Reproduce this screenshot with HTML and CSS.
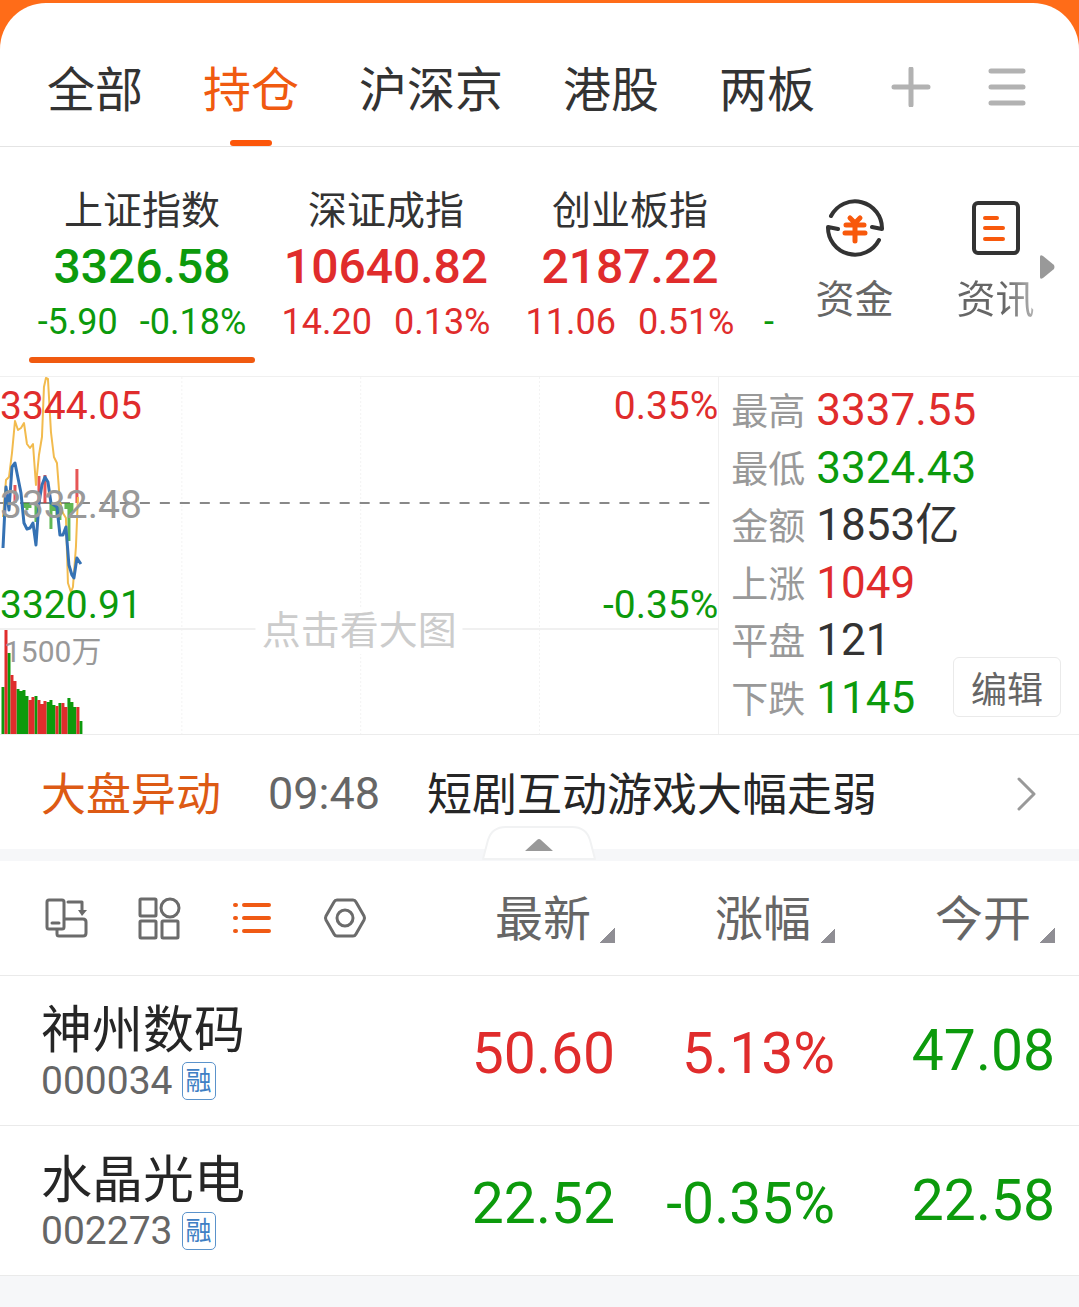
FILE: index.html
```
<!DOCTYPE html>
<html lang="zh-CN">
<head>
    <meta charset="UTF-8">
    <meta name="viewport" content="width=device-width, initial-scale=1.0">
    <title>自选股</title>
    <link rel="stylesheet" href="styles.css">
</head>
<body>
    <div class="top">
        <header class="tabs">
            <nav class="tabList">
                <a href="#all">全部</a>
                <a href="#hold" class="active">持仓</a>
                <a href="#hsj">沪深京</a>
                <a href="#hk">港股</a>
                <a href="#lb">两板</a>
            </nav>
            <div class="tabActions">
                <button type="button" aria-label="添加">
                    <svg width="40" height="40" viewBox="0 0 40 40"><path d="M20 2V38M3 20H37"/></svg>
                </button>
                <button type="button" aria-label="菜单">
                    <svg width="40" height="40" viewBox="0 0 40 40"><path d="M4 4H36M4 20H36M4 36H36"/></svg>
                </button>
            </div>
        </header>
    </div>

    <section class="indexBar">
        <div class="indexList">
            <a href="#sh" class="index down active">
                <span class="indexName">上证指数</span>
                <strong>3326.58</strong>
                <span class="change"><span>-5.90</span><span>-0.18%</span></span>
            </a>
            <a href="#sz" class="index up">
                <span class="indexName">深证成指</span>
                <strong>10640.82</strong>
                <span class="change"><span>14.20</span><span>0.13%</span></span>
            </a>
            <a href="#cyb" class="index up">
                <span class="indexName">创业板指</span>
                <strong>2187.22</strong>
                <span class="change"><span>11.06</span><span>0.51%</span></span>
            </a>
            <a href="#next" class="index down cut">
                <span class="change">-</span>
            </a>
        </div>
        <div class="shortcuts">
            <a href="#fund">
                <svg width="60" height="60" viewBox="0 0 60 60">
                    <g class="ink">
                        <path d="M6 18A27 27 0 0 1 57 31L47 29"/>
                        <path d="M54 42A27 27 0 0 1 3 29L13 31"/>
                    </g>
                    <path class="hot" d="M25 20L30 25L35 20M21 27H39M20 35H40M30 26V43"/>
                </svg>
                <span>资金</span>
            </a>
            <a href="#news">
                <svg width="60" height="60" viewBox="0 0 60 60">
                    <rect class="ink" x="8" y="5" width="44" height="50" rx="4"/>
                    <path class="hot thin" d="M19 20H31M19 30H37M19 41H37"/>
                </svg>
                <span class="fade">资讯</span>
            </a>
            <svg class="more" width="16" height="26" viewBox="0 0 16 26"><path d="M1 3V23Q1 26 4 24L15 15Q16 13 15 11L4 2Q1 0 1 3Z"/></svg>
        </div>
    </section>

    <section class="market">
        <div class="chart">
            <svg viewBox="0 0 719 357" preserveAspectRatio="none">
                <path class="grid dotted" d="M182 0V357M361 0V357M540 0V357"/>
                <path class="grid" d="M0 252H719"/>
                <path class="middle" d="M0 126H710"/>
                <path class="bar red" d="M15 126V108M39 126V99M45 126V98"/>
                <path class="bar red" d="M77 126V92"/>
                <path class="bar green" d="M24 126V131M27 126V133M30 126V131M36 126V145M51 126V152M54 126V134M57 126V138M60 126V143M66 126V132M69 126V164M72 126V136"/>
                <path class="average" d="M3 140L6 103L9 100L12 76L15 44L18 53L21 51L24 46L27 67L30 71L33 67L36 108L39 78L42 60L44 10L46 1L48 2L51 55L54 80L57 86L60 125L63 136L66 141L68 206L71 215L73 210L76 170L78 120"/>
                <path class="price" d="M3 171L6 110L9 133L12 90L15 86L18 101L21 116L24 146L27 152L30 151L33 146L36 168L39 126L42 108L45 100L48 105L51 126L54 128L57 130L60 158L63 158L66 150L69 188L72 198L74 201L77 181L81 187"/>
                <path class="volume green" d="M3 357V310M9 357V276M18 357V312M21 357V314M24 357V313M27 357V319M36 357V319M48 357V325M51 357V323M54 357V328M60 357V326M69 357V321M72 357V325M75 357V330M81 357V344"/>
                <path class="volume red" d="M6 357V253M12 357V298M15 357V304M30 357V323M33 357V320M39 357V323M42 357V327M45 357V324M57 357V329M63 357V326M66 357V330M78 357V330"/>
            </svg>
            <span class="axis high up">3344.05</span>
            <span class="axis mid">3332.48</span>
            <span class="axis low down">3320.91</span>
            <span class="axis high right up">0.35%</span>
            <span class="axis low right down">-0.35%</span>
            <span class="axis amount">1500万</span>
            <a class="enlarge" href="#chart">点击看大图</a>
        </div>
        <div class="stats">
            <dl>
                <div><dt>最高</dt><dd class="up">3337.55</dd></div>
                <div><dt>最低</dt><dd class="down">3324.43</dd></div>
                <div><dt>金额</dt><dd>1853亿</dd></div>
                <div><dt>上涨</dt><dd class="up">1049</dd></div>
                <div><dt>平盘</dt><dd>121</dd></div>
                <div><dt>下跌</dt><dd class="down">1145</dd></div>
            </dl>
            <button type="button" class="edit">编辑</button>
        </div>
    </section>

    <section class="alertBar">
        <a href="#alert">
            <span class="alertTag">大盘异动</span>
            <time>09:48</time>
            <span class="alertTitle">短剧互动游戏大幅走弱</span>
            <svg width="20" height="34" viewBox="0 0 20 34"><path d="M2 2L17 17L2 32"/></svg>
        </a>
        <button type="button" class="fold" aria-label="收起">
            <svg width="114" height="34" viewBox="0 0 114 34">
                <path class="foldEdge" d="M1 33L6 14Q10 1 24 1H90Q104 1 108 14L113 33Z"/>
                <path class="foldArrow" d="M43 25L55 14Q57 12 59 14L71 25Z"/>
            </svg>
        </button>
    </section>

    <table class="stocks">
        <thead>
            <tr>
                <th>
                    <div class="tools">
                        <button type="button" aria-label="切换横屏">
                            <svg width="44" height="44" viewBox="0 0 44 44">
                                <rect x="3" y="4" width="17" height="29" rx="2"/>
                                <path d="M8 27H15M13 34V38Q13 40 15 40H39Q42 40 42 37V26Q42 23 39 23H21M24 6H38V16"/>
                                <path class="solid" d="M34 14H43L38 20Z"/>
                            </svg>
                        </button>
                        <button type="button" aria-label="宫格">
                            <svg width="44" height="44" viewBox="0 0 44 44">
                                <rect x="3" y="3" width="16" height="17" rx="1"/>
                                <circle cx="33" cy="12" r="9"/>
                                <rect x="3" y="25" width="16" height="17" rx="1"/>
                                <rect x="25" y="25" width="16" height="17" rx="1"/>
                            </svg>
                        </button>
                        <button type="button" class="on" aria-label="列表">
                            <svg width="44" height="44" viewBox="0 0 44 44"><path d="M5 9H6M5 22H6M5 35H6M14 9H39M14 22H39M14 35H39"/></svg>
                        </button>
                        <button type="button" aria-label="设置">
                            <svg width="44" height="44" viewBox="0 0 44 44">
                                <path d="M14 4H30Q32 4 33 6L41 20Q42 22 41 24L33 38Q32 40 30 40H14Q12 40 11 38L3 24Q2 22 3 20L11 6Q12 4 14 4Z"/>
                                <circle cx="22" cy="22" r="8"/>
                            </svg>
                        </button>
                    </div>
                </th>
                <th><button type="button" class="sort">最新</button></th>
                <th><button type="button" class="sort">涨幅</button></th>
                <th><button type="button" class="sort">今开</button></th>
            </tr>
        </thead>
        <tbody>
            <tr>
                <td>
                    <div class="stockName">神州数码</div>
                    <div class="stockCode">000034<span class="tag">融</span></div>
                </td>
                <td class="up">50.60</td>
                <td class="up">5.13%</td>
                <td class="down">47.08</td>
            </tr>
            <tr>
                <td>
                    <div class="stockName">水晶光电</div>
                    <div class="stockCode">002273<span class="tag">融</span></div>
                </td>
                <td class="down">22.52</td>
                <td class="down">-0.35%</td>
                <td class="down">22.58</td>
            </tr>
        </tbody>
    </table>
</body>
</html>
```
FILE: styles.css
```
* {
    box-sizing: border-box;
}

body {
    margin: 0;
    font-family: Roboto, "Noto Sans CJK SC", sans-serif;
    background-color: #f6f7f9;
    color: #333;
}

a {
    color: inherit;
    text-decoration: none;
}

button {
    padding: 0;
    border: none;
    background: none;
    font-family: inherit;
    color: inherit;
    cursor: pointer;
}

svg {
    display: block;
    fill: none;
    stroke-linecap: round;
    stroke-linejoin: round;
}

/* Up is red and down is green */
.up {
    color: #e02c2c;
}

.down {
    color: #0c9a0c;
}

/* Tabs */
.top {
    padding-top: 3px;
    background-color: #ff6c18;
}

.tabs {
    display: flex;
    justify-content: space-between;
    padding: 58px 52px 0 47px;
    border-bottom: 1px solid #e4e4e4;
    border-radius: 46px 46px 0 0;
    background-color: #fff;
}

.tabList {
    display: flex;
    gap: 60px;
    font-size: 48px;
    line-height: 60px;
}

.tabList a {
    position: relative;
    padding-bottom: 25px;
}

.tabList .active {
    color: #f05a10;
}

.tabList .active::after {
    content: "";
    position: absolute;
    left: 50%;
    bottom: 0;
    width: 42px;
    height: 6px;
    margin-left: -21px;
    border-radius: 3px;
    background-color: #fc560a;
}

.tabActions {
    display: flex;
    align-items: center;
    gap: 56px;
    height: 52px;
}

.tabActions svg {
    stroke: #b2b2b2;
    stroke-width: 5;
}

/* Index bar */
.indexBar {
    display: flex;
    height: 229px;
    background-color: #fff;
}

.indexList {
    display: flex;
    flex: 1;
    min-width: 0;
    padding: 42px 0 13px 20px;
    overflow: hidden;
}

.index {
    position: relative;
    display: flex;
    flex: 0 0 244px;
    flex-direction: column;
    align-items: center;
}

.indexName {
    font-size: 39px;
    line-height: 44px;
    color: #333;
}

.index strong {
    font-size: 48px;
    font-weight: 500;
    line-height: 68px;
}

.change {
    display: flex;
    gap: 22px;
    font-size: 36px;
    line-height: 42px;
}

.index.active::after {
    content: "";
    position: absolute;
    left: 9px;
    right: 9px;
    bottom: 0;
    height: 6px;
    border-radius: 3px;
    background-color: #f05a10;
}

.index.cut {
    align-items: flex-start;
    padding: 112px 0 0 12px;
}

.shortcuts {
    position: relative;
    display: flex;
    padding: 51px 13px 0 0;
}

.shortcuts a {
    display: flex;
    flex-direction: column;
    align-items: center;
    width: 141px;
    font-size: 39px;
    line-height: 44px;
    color: #666;
}

.shortcuts a svg {
    margin-bottom: 20px;
    stroke-width: 4;
}

.ink {
    stroke: #333;
}

.hot {
    stroke: #f8590c;
    stroke-width: 5;
}

.thin {
    stroke-width: 4;
}

.fade {
    background: linear-gradient(to right, #666 60%, #b4b4b4);
    background-clip: text;
    -webkit-background-clip: text;
    color: transparent;
}

.more {
    position: absolute;
    top: 107px;
    right: 24px;
    fill: #999;
}

/* Market chart and numbers */
.market {
    display: grid;
    grid-template-columns: 2fr 1fr;
    height: 359px;
    border-top: 1px solid #f0f0f0;
    border-bottom: 1px solid #ececec;
    background-color: #fff;
}

.chart {
    position: relative;
    border-right: 1px solid #f0f0f0;
}

.chart svg {
    width: 100%;
    height: 357px;
    stroke-linecap: butt;
}

.grid {
    stroke: #f0f0f0;
    stroke-width: 2;
}

.dotted {
    stroke: #f3f3f3;
    stroke-width: 1;
    stroke-dasharray: 2 2;
}

.middle {
    stroke: #888;
    stroke-width: 2;
    stroke-dasharray: 10 10;
}

.red {
    stroke: #e02c2c;
}

.green {
    stroke: #0c9a0c;
}

.bar {
    stroke-width: 3;
    opacity: 0.8;
}

.bar.green {
    stroke: #3aa62a;
}

.volume {
    stroke-width: 3;
}

.average {
    stroke: #f2bb4e;
    stroke-width: 2;
}

.price {
    stroke: #3572b4;
    stroke-width: 3;
}

.axis {
    position: absolute;
    left: 0;
    font-size: 39px;
    line-height: 46px;
}

.axis.right {
    left: auto;
    right: 0;
}

.high {
    top: 6px;
}

.mid {
    top: 105px;
    color: #999;
}

.low {
    top: 205px;
}

.amount {
    top: 257px;
    left: 4px;
    font-size: 30px;
    line-height: 36px;
    color: #999;
}

.enlarge {
    position: absolute;
    top: 231px;
    left: 50%;
    padding: 0 6px;
    transform: translateX(-50%);
    background-color: #fff;
    font-size: 39px;
    line-height: 46px;
    white-space: nowrap;
    color: #ccc;
}

.stats {
    position: relative;
    padding: 6px 0 6px 12px;
}

.stats dl {
    display: flex;
    flex-direction: column;
    justify-content: space-around;
    height: 100%;
    margin: 0;
}

.stats dl div {
    display: flex;
    align-items: baseline;
    gap: 11px;
    line-height: 54px;
    white-space: nowrap;
}

.stats dt {
    font-size: 37px;
    color: #999;
}

.stats dd {
    margin: 0;
    font-size: 44px;
}

/* Floats over the end of the last row */
.edit {
    position: absolute;
    right: 18px;
    bottom: 17px;
    width: 108px;
    height: 60px;
    border: 1px solid #eaeaea;
    border-radius: 6px;
    font-size: 36px;
    color: #666;
}

/* Market alert */
.alertBar {
    position: relative;
    border-bottom: 12px solid #f6f7f9;
    background-color: #fff;
}

.alertBar a {
    display: flex;
    align-items: center;
    gap: 47px;
    height: 114px;
    padding: 4px 42px 0 41px;
    font-size: 45px;
    line-height: 60px;
}

.alertTag,
.alertTitle {
    padding-top: 4px;
}

.alertTag {
    color: #dd5a14;
}

.alertBar time {
    color: #666;
}

.alertTitle {
    flex: 1;
    color: #262626;
}

.alertBar a svg {
    stroke: #999;
    stroke-width: 3;
}

.fold {
    position: absolute;
    left: 50%;
    bottom: -11px;
    margin-left: -58px;
}

.foldEdge {
    fill: #fff;
    stroke: #f1f2f3;
    stroke-width: 2;
}

.foldArrow {
    fill: #999;
}

/* Stock table */
.stocks {
    width: 100%;
    border-collapse: collapse;
    table-layout: fixed;
    background-color: #fff;
}

.stocks tr {
    border-bottom: 1px solid #eaeaea;
}

.stocks th {
    height: 114px;
    padding: 0;
    font-weight: normal;
    text-align: right;
}

.stocks th:nth-child(2),
.stocks th:nth-child(3) {
    width: 220px;
}

.stocks th:last-child {
    width: 244px;
}

.stocks th:last-child,
.stocks td:last-child {
    padding: 0 24px 0 0;
}

.tools {
    display: flex;
    gap: 49px;
    padding-left: 44px;
}

.tools svg {
    stroke: #6b6b6b;
    stroke-width: 3;
}

.tools .solid {
    fill: #6b6b6b;
    stroke-width: 0;
}

.tools .on svg {
    stroke: #f05a14;
    stroke-width: 4;
}

.sort {
    padding-top: 4px;
    font-size: 48px;
    line-height: 60px;
    color: #666;
}

.sort::after {
    content: "";
    display: inline-block;
    width: 15px;
    height: 15px;
    margin-left: 9px;
    vertical-align: -7px;
    background: linear-gradient(135deg, transparent 50%, #8f8e94 50%);
}

.stocks td {
    height: 150px;
    padding: 6px 0 0;
    font-size: 57px;
    text-align: right;
}

.stocks td:first-child {
    padding: 2px 0 0 41px;
    text-align: left;
}

.stockName {
    font-size: 51px;
    line-height: 60px;
    color: #262626;
}

.stockCode {
    display: flex;
    align-items: center;
    gap: 9px;
    font-size: 39px;
    line-height: 40px;
    color: #666;
}

.tag {
    width: 34px;
    height: 38px;
    border: 1px solid #5b93cb;
    border-radius: 5px;
    font-size: 26px;
    line-height: 36px;
    text-align: center;
    color: #3f80c4;
}
```
